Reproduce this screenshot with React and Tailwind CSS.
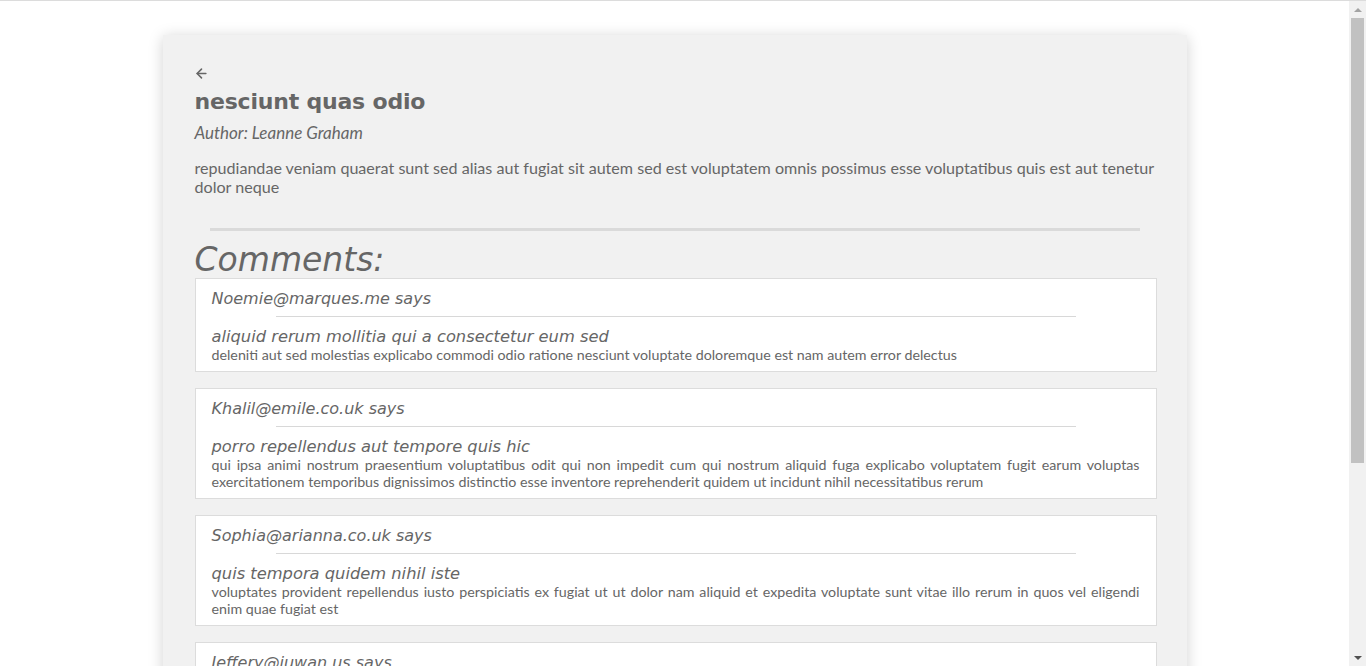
import { ArrowLeft } from "lucide-react";

const post = {
  title: "nesciunt quas odio",
  author: "Leanne Graham",
  body: "repudiandae veniam quaerat sunt sed alias aut fugiat sit autem sed est voluptatem omnis possimus esse voluptatibus quis est aut tenetur dolor neque",
};

const comments = [
  {
    email: "Noemie@marques.me",
    name: "aliquid rerum mollitia qui a consectetur eum sed",
    body: "deleniti aut sed molestias explicabo commodi odio ratione nesciunt voluptate doloremque est nam autem error delectus",
  },
  {
    email: "Khalil@emile.co.uk",
    name: "porro repellendus aut tempore quis hic",
    body: "qui ipsa animi nostrum praesentium voluptatibus odit qui non impedit cum qui nostrum aliquid fuga explicabo voluptatem fugit earum voluptas exercitationem temporibus dignissimos distinctio esse inventore reprehenderit quidem ut incidunt nihil necessitatibus rerum",
  },
  {
    email: "Sophia@arianna.co.uk",
    name: "quis tempora quidem nihil iste",
    body: "voluptates provident repellendus iusto perspiciatis ex fugiat ut ut dolor nam aliquid et expedita voluptate sunt vitae illo rerum in quos vel eligendi enim quae fugiat est",
  },
  {
    email: "Jeffery@juwan.us",
    name: "in tempore eos beatae est",
    body: "repudiandae repellat quia sequi est dolore explicabo nihil et et sit et et praesentium iste atque asperiores tenetur",
  },
  {
    email: "Isaias_Kuhic@jarrett.net",
    name: "autem ab ea sit alias hic provident sit",
    body: "sunt aut quae laboriosam sit ut impedit adipisci quas consequatur voluptas et sed fugiat qui nostrum est consequatur ut quia ipsa",
  },
];

const display = { fontFamily: '"DejaVu Sans", Inter, sans-serif' };

function Comment({ c }) {
  return (
    <div className="border border-[#dcdcdc] bg-white px-4 pt-[10px] pb-[8px]">
      <p className="text-[16px] italic leading-[20px]" style={display}>
        {c.email} says
      </p>
      <hr className="mx-auto mt-[7px] w-[800px] border-0 border-t border-[#d8d8d8]" />
      <p className="mt-[10px] text-[16.3px] italic leading-[19px]" style={display}>
        {c.name}
      </p>
      <p className="text-justify text-[14.25px] leading-[17px]">{c.body}</p>
    </div>
  );
}

function Scrollbar() {
  return (
    <aside className="flex h-full w-[17px] shrink-0 flex-col items-center bg-[#f1f1f1]">
      <div className="flex h-[17px] items-center justify-center">
        <div className="h-0 w-0 border-x-[4px] border-b-[4px] border-x-transparent border-b-[#a3a3a3]" />
      </div>
      <div className="h-[445px] w-[13px] bg-[#c1c1c1]" />
      <div className="flex-1" />
      <div className="flex h-[17px] items-center justify-center">
        <div className="h-0 w-0 border-x-[4px] border-t-[4px] border-x-transparent border-t-[#505050]" />
      </div>
    </aside>
  );
}

export default function App() {
  return (
    <div
      className="flex h-screen overflow-hidden border-t border-[#dcdcdc] bg-white text-[#666]"
      style={{ fontFamily: '"Lato", "Open Sans", sans-serif' }}
    >
      <main className="flex-1 overflow-hidden pt-[34px] pb-10">
        <div className="mx-auto w-[1024px] bg-[#f1f1f1] pt-[31px] pr-[30px] pb-8 pl-8 shadow-[0_2px_14px_rgba(0,0,0,0.18)]">
          <button type="button" className="flex h-[14px] items-center text-[#666]">
            <ArrowLeft className="h-[15px] w-[15px] -ml-[1px]" strokeWidth={2.5} />
          </button>
          <h1 className="mt-[7px] text-[22px] font-bold leading-[30px] tracking-[-0.2px]" style={display}>
            {post.title}
          </h1>
          <p className="mt-[6px] text-[17px] italic leading-[20px]">Author: {post.author}</p>
          <p className="mt-[15px] pr-[2px] text-[16.1px] leading-[19px]">{post.body}</p>
          <hr className="mr-[17px] ml-[15px] mt-[32px] border-0 border-t-[3px] border-[#dadada]" />
          <h2 className="mt-[11px] text-[33px] italic leading-[36px]" style={display}>
            Comments:
          </h2>
          <div className="flex flex-col gap-4">
            {comments.map((c) => (
              <Comment key={c.email} c={c} />
            ))}
          </div>
        </div>
      </main>
      <Scrollbar />
    </div>
  );
}
